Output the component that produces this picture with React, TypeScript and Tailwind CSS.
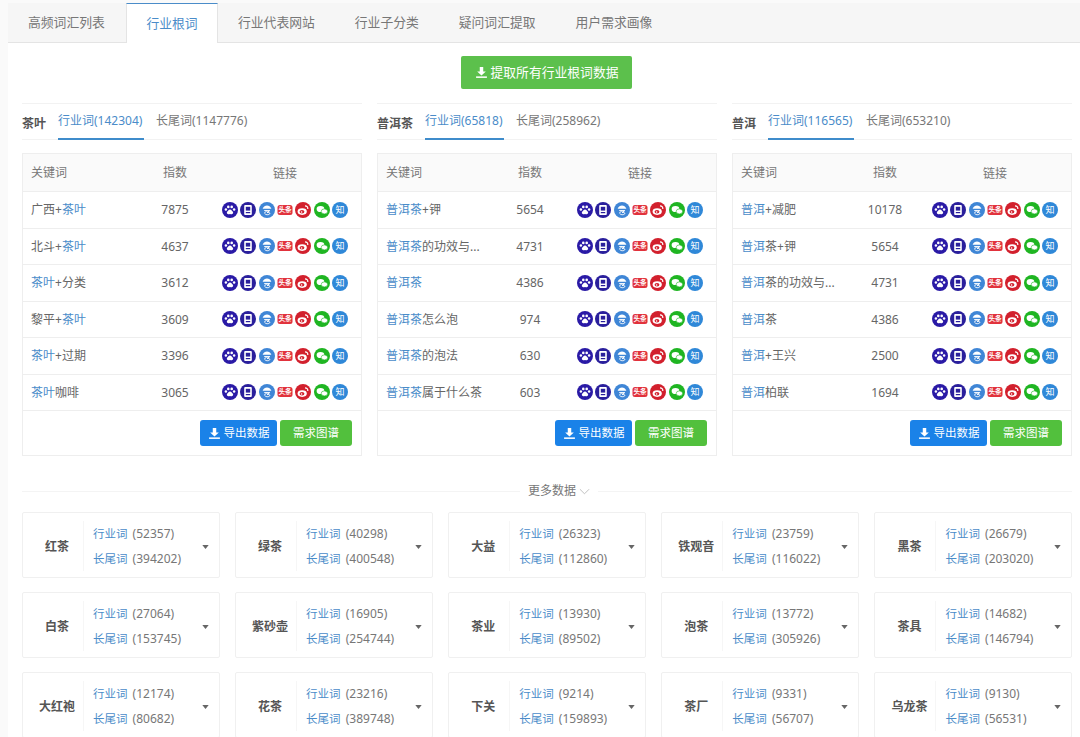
import React from "react";

const FONT = '"Noto Sans", "Noto Sans CJK SC", sans-serif';

type Seg = [string, boolean?];
const Kw = ({ segs }: { segs: Seg[] }) => (
  <span>
    {segs.map((s, i) => (
      <span key={i} className={s[1] ? "text-[#4a8cc9]" : ""}>
        {s[0]}
      </span>
    ))}
  </span>
);

const DownloadIcon = () => (
  <svg viewBox="0 0 12 12" className="w-[13px] h-[13px] shrink-0" fill="currentColor">
    <path d="M4.4 1h3.2v4h2.4L6 8.8 2 5h2.4z" />
    <rect x="1" y="9.6" width="10" height="1.4" />
  </svg>
);

const Icons = () => (
  <div className="flex items-center gap-[2.3px]">
    <svg viewBox="0 0 16 16" className="w-4 h-4">
      <circle cx="8" cy="8" r="8" fill="#2a1aa6" />
      <path d="M8 7.6c-1.4 0-1.8 1.3-2.7 2-.8.7-.7 2.6 1 2.6.7 0 1.1-.3 1.7-.3s1 .3 1.7.3c1.7 0 1.8-1.9 1-2.6-.9-.7-1.3-2-2.7-2z" fill="#fff" />
      <circle cx="3.9" cy="7.6" r="1.25" fill="#fff" />
      <circle cx="12.1" cy="7.6" r="1.25" fill="#fff" />
      <circle cx="6.3" cy="4.9" r="1.3" fill="#fff" />
      <circle cx="9.7" cy="4.9" r="1.3" fill="#fff" />
    </svg>
    <svg viewBox="0 0 16 16" className="w-4 h-4">
      <circle cx="8" cy="8" r="8" fill="#2a1f9c" />
      <rect x="4.2" y="3" width="7.6" height="10" rx="1" fill="#fff" />
      <rect x="5.8" y="4.8" width="4.4" height="3.8" fill="#2a1f9c" />
      <rect x="5.8" y="10" width="4.4" height="1.2" fill="#2a1f9c" />
    </svg>
    <svg viewBox="0 0 16 16" className="w-4 h-4">
      <circle cx="8" cy="8" r="8" fill="#3f86d6" />
      <path d="M3.6 6.800C4.600 4.400 6.200 3.400 8 3.400s3.400 1 4.400 3.400z" fill="#fff" />
      <path d="M5.200 8.600h5.600L8 10.400c1.500-.3 2.800.2 2.800 1 0 .8-1.100 1.300-2.300 1.300-.9 0-1.700-.2-2.300-.7M8 8.600 5 11.400" fill="none" stroke="#fff" strokeWidth="1" />
    </svg>
    <svg viewBox="0 0 16 16" className="w-4 h-4">
      <rect x="0.500" y="3" width="15" height="10" rx="2.500" fill="#e1323c" />
      <text x="8" y="10.300" textAnchor="middle" fontSize="6.600" fontWeight="700" fill="#fff">
        头条
      </text>
    </svg>
    <svg viewBox="0 0 16 16" className="w-4 h-4">
      <circle cx="8" cy="8" r="8" fill="#d2202d" />
      <ellipse cx="7.200" cy="9.600" rx="4.600" ry="3.300" fill="#fff" />
      <ellipse cx="7" cy="9.800" rx="2.400" ry="1.800" fill="#d2202d" />
      <circle cx="6.600" cy="10" r="0.800" fill="#fff" />
      <path d="M10 3.800c1.800 0 3 1.400 2.800 3.200" fill="none" stroke="#fff" strokeWidth="1.200" />
    </svg>
    <svg viewBox="0 0 16 16" className="w-4 h-4">
      <circle cx="8" cy="8" r="8" fill="#1fb522" />
      <ellipse cx="6.500" cy="7" rx="3.900" ry="3.100" fill="#fff" />
      <ellipse cx="10.400" cy="9.400" rx="3.200" ry="2.500" fill="#fff" stroke="#1fb522" strokeWidth="0.600" />
    </svg>
    <svg viewBox="0 0 16 16" className="w-4 h-4">
      <circle cx="8" cy="8" r="8" fill="#2f88d8" />
      <text x="8" y="11.300" textAnchor="middle" fontSize="9" fill="#fff">
        知
      </text>
    </svg>
  </div>
);

type Col = {
  name: string;
  a: string;
  b: string;
  nw: string;
  aw: string;
  rows: { k: Seg[]; n: string }[];
};

const cols: Col[] = [
  {
    name: "茶叶",
    a: "行业词(142304)",
    b: "长尾词(1147776)",
    nw: "w-[36px]",
    aw: "w-[86px]",
    rows: [
      { k: [["广西+"], ["茶叶", true]], n: "7875" },
      { k: [["北斗+"], ["茶叶", true]], n: "4637" },
      { k: [["茶叶", true], ["+分类"]], n: "3612" },
      { k: [["黎平+"], ["茶叶", true]], n: "3609" },
      { k: [["茶叶", true], ["+过期"]], n: "3396" },
      { k: [["茶叶", true], ["咖啡"]], n: "3065" },
    ],
  },
  {
    name: "普洱茶",
    a: "行业词(65818)",
    b: "长尾词(258962)",
    nw: "w-[48px]",
    aw: "w-[79px]",
    rows: [
      { k: [["普洱茶", true], ["+钾"]], n: "5654" },
      { k: [["普洱茶", true], ["的功效与..."]], n: "4731" },
      { k: [["普洱茶", true]], n: "4386" },
      { k: [["普洱茶", true], ["怎么泡"]], n: "974" },
      { k: [["普洱茶", true], ["的泡法"]], n: "630" },
      { k: [["普洱茶", true], ["属于什么茶"]], n: "603" },
    ],
  },
  {
    name: "普洱",
    a: "行业词(116565)",
    b: "长尾词(653210)",
    nw: "w-[36px]",
    aw: "w-[86px]",
    rows: [
      { k: [["普洱", true], ["+减肥"]], n: "10178" },
      { k: [["普洱", true], ["茶+钾"]], n: "5654" },
      { k: [["普洱", true], ["茶的功效与..."]], n: "4731" },
      { k: [["普洱", true], ["茶"]], n: "4386" },
      { k: [["普洱", true], ["+王兴"]], n: "2500" },
      { k: [["普洱", true], ["柏联"]], n: "1694" },
    ],
  },
];

const cards: [string, string, string][] = [
  ["红茶", "52357", "394202"],
  ["绿茶", "40298", "400548"],
  ["大益", "26323", "112860"],
  ["铁观音", "23759", "116022"],
  ["黑茶", "26679", "203020"],
  ["白茶", "27064", "153745"],
  ["紫砂壶", "16905", "254744"],
  ["茶业", "13930", "89502"],
  ["泡茶", "13772", "305926"],
  ["茶具", "14682", "146794"],
  ["大红袍", "12174", "80682"],
  ["花茶", "23216", "389748"],
  ["下关", "9214", "159893"],
  ["茶厂", "9331", "56707"],
  ["乌龙茶", "9130", "56531"],
];

const tabs = ["高频词汇列表", "行业根词", "行业代表网站", "行业子分类", "疑问词汇提取", "用户需求画像"];

const Panel = ({ c }: { c: Col }) => (
  <div className="flex flex-col">
    <div className="h-[37px] border-y border-[#f2f2f2] flex items-stretch">
      <div className={`${c.nw} pt-[12px] text-[12px] font-bold text-[#555] leading-[16px]`}>{c.name}</div>
      <div className={`${c.aw} pt-[8px] text-[12px] leading-[17px] text-[#4a8cc9] border-b-2 border-[#3f8ccb] mb-[-1px] whitespace-nowrap`}>
        {c.a}
      </div>
      <div className="ml-[12px] pt-[8px] text-[12px] leading-[17px] text-[#777] whitespace-nowrap">{c.b}</div>
    </div>
    <div className="mt-[13px] border border-[#eeeeee] flex flex-col">
      <div className="h-[38px] pt-[1px] bg-[#fafafa] border-b border-[#eeeeee] grid grid-cols-[120px_66px_1fr] items-center text-[12px] text-[#777]">
        <span className="pl-2">关键词</span>
        <span className="pl-[20px]">指数</span>
        <span className="text-center pt-[2px]">链接</span>
      </div>
      {c.rows.map((r, i) => (
        <div key={i} className="h-[36.5px] pt-[1px] border-b border-[#eeeeee] grid grid-cols-[120px_66px_1fr] items-center text-[12px] text-[#666]">
          <span className="pl-2 whitespace-nowrap">
            <Kw segs={r.k} />
          </span>
          <span className="text-center pr-[2px]">{r.n}</span>
          <span className="flex justify-center mt-[-1px]">
            <Icons />
          </span>
        </div>
      ))}
      <div className="h-[44px] flex items-center justify-end gap-[3px] pr-[9px]">
        <button className="h-[26px] w-[77px] rounded-[3px] bg-[#1a82e8] text-white text-[11.5px] flex items-center justify-center gap-[3px]">
          <DownloadIcon />
          导出数据
        </button>
        <button className="h-[26px] w-[72px] rounded-[3px] bg-[#52c03d] text-white text-[11.5px]">需求图谱</button>
      </div>
    </div>
  </div>
);

const Card = ({ c }: { c: [string, string, string] }) => (
  <div className="h-[66px] pt-[3px] border border-[#f0f0f0] rounded-[2px] flex items-center">
    <div className="w-[60px] pl-[8px] text-center text-[12px] font-bold text-[#555] shrink-0 whitespace-nowrap">{c[0]}</div>
    <div className="flex-1 h-[50px] mt-[-2px] border-l border-[#f6f6f6] pl-[9px] flex flex-col justify-between text-[12px] leading-[25px] text-[#777] whitespace-nowrap">
      <div>
        <span className="text-[#4a8cc9] text-[11.5px] mr-[2px]">行业词</span> ({c[1]})
      </div>
      <div>
        <span className="text-[#4a8cc9] text-[11.5px] mr-[2px]">长尾词</span> ({c[2]})
      </div>
    </div>
    <svg viewBox="0 0 8 5" className="w-[7px] h-[4px] mr-[10px] shrink-0" fill="#666">
      <path d="M0 0h8L4 5z" />
    </svg>
  </div>
);

export default function App() {
  return (
    <div className="w-[1080px] h-[737px] overflow-hidden bg-[#fafafa] pl-[8px] pt-[3px]" style={{ fontFamily: FONT }}>
      <div className="h-full bg-white flex flex-col">
        <div className="h-[40px] shrink-0 bg-[#f6f6f6] border-b border-[#e4e4e4] flex text-[12.8px] text-[#777]">
          {tabs.map((t, i) =>
            i === 1 ? (
              <div key={t} className="w-[92px] h-[40px] bg-white border-x border-t border-[#e4e4e4] border-t-[#4a8cc9] text-[#4a8cc9] flex items-center justify-center">
                {t}
              </div>
            ) : (
              <div key={t} className={`flex items-center whitespace-nowrap ${i === 0 ? "pl-[20px] w-[118px]" : "px-[20px]"}`}>
                {t}
              </div>
            )
          )}
        </div>
        <div className="flex justify-center mt-[13px] pl-[5px]">
          <button className="w-[171px] h-[33px] rounded-[2px] bg-[#5cc04c] text-white text-[12.8px] flex items-center justify-center gap-[3px]">
            <DownloadIcon />
            提取所有行业根词数据
          </button>
        </div>
        <div className="pl-[14px] pr-[8px] mt-[14px] grid grid-cols-3 gap-[15px]">
          {cols.map((c) => (
            <Panel key={c.name} c={c} />
          ))}
        </div>
        <div className="pl-[14px] pr-[8px] mt-[26px] flex items-center text-[12px] text-[#777]">
          <div className="w-[498px] border-t border-[#f4f4f4]" />
          <span className="px-[8px] flex items-center gap-[3px]">
            更多数据
            <svg viewBox="0 0 12 7" className="w-[11px] h-[7px]" fill="none" stroke="#bbb">
              <path d="M1 1l5 5 5-5" />
            </svg>
          </span>
          <div className="flex-1 border-t border-[#f4f4f4]" />
        </div>
        <div className="pl-[14px] pr-[8px] mt-[12px] grid grid-cols-5 gap-x-[15.5px] gap-y-[14px]">
          {cards.map((c) => (
            <Card key={c[0]} c={c} />
          ))}
        </div>
      </div>
    </div>
  );
}
